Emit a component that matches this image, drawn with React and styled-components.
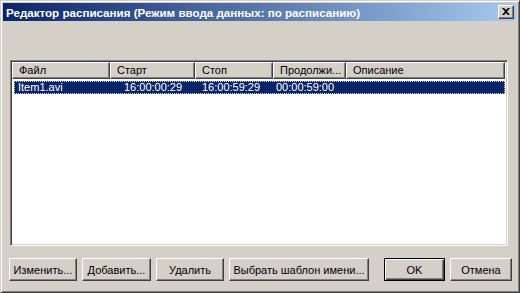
import React from "react";
import styled, { createGlobalStyle } from "styled-components";

const Global = createGlobalStyle`
  html, body { margin: 0; padding: 0; background: #d4d0c8; }
  body { font-family: "Liberation Sans", Arial, sans-serif; font-size: 11px; }
  * { box-sizing: border-box; }
`;

const Window = styled.div`
  width: 520px;
  height: 293px;
  display: flex;
  flex-direction: column;
  background: #d4d0c8;
  border: 1px solid;
  border-color: #d4d0c8 #404040 #404040 #d4d0c8;
  box-shadow: inset 1px 1px #ffffff, inset -1px -1px #808080;
  padding: 2px 3px 3px 2px;
`;

const TitleBar = styled.div`
  height: 18px;
  flex: none;
  display: flex;
  align-items: center;
  justify-content: space-between;
  padding: 0 2px 0 3px;
  background: linear-gradient(to right, #0a246a, #a6caf0);
`;

const TitleText = styled.span`
  color: #ffffff;
  font-family: "Liberation Sans", Arial, sans-serif;
  font-weight: bold;
  font-size: 11.6px;
  white-space: nowrap;
`;

const CloseButton = styled.div`
  width: 16px;
  height: 14px;
  background: #d4d0c8;
  border: 1px solid;
  border-color: #ffffff #404040 #404040 #ffffff;
  box-shadow: inset -1px -1px #808080;
  display: flex;
  align-items: center;
  justify-content: center;
  padding-bottom: 1px;
`;

const Client = styled.div`
  flex: 1;
  display: flex;
  flex-direction: column;
  padding: 39px 7px 8px 7px;
`;

const ListBox = styled.div`
  flex: 1;
  background: #ffffff;
  border: 1px solid;
  border-color: #808080 #ffffff #ffffff #808080;
  box-shadow: inset 1px 1px #404040, inset -1px -1px #d4d0c8;
  padding: 1px 2px 2px 1px;
  display: flex;
  flex-direction: column;
  margin-right: 1px;
`;

const Header = styled.div`
  display: flex;
  height: 17px;
  flex: none;
  background: #d4d0c8;
`;

const HeadCell = styled.div`
  width: ${(p) => (p.$w ? `${p.$w}px` : "auto")};
  flex: ${(p) => (p.$w ? "none" : "1")};
  border: 1px solid;
  border-color: #ffffff #404040 #404040 #ffffff;
  box-shadow: inset -1px -1px #808080;
  color: #000000;
  padding: 1px 0 0 6px;
  line-height: 13px;
  white-space: nowrap;
  overflow: hidden;
`;

const Row = styled.div`
  display: flex;
  height: 13px;
  margin: 2px 0 0 2px;
  background: ${(p) => (p.$selected ? "#0a246a" : "transparent")};
  color: ${(p) => (p.$selected ? "#ffffff" : "#000000")};
  outline: ${(p) => (p.$selected ? "1px dotted #d8d8a8" : "none")};
  outline-offset: -1px;
`;

const Cell = styled.div`
  width: ${(p) => (p.$w ? `${p.$w}px` : "auto")};
  flex: ${(p) => (p.$w ? "none" : "1")};
  padding-left: ${(p) => p.$indent}px;
  line-height: 13px;
  white-space: nowrap;
  overflow: hidden;
`;

const ButtonRow = styled.div`
  display: flex;
  align-items: center;
  gap: 5px;
  margin: 12px 0 0 -1px;
  flex: none;
`;

const Spacer = styled.div`
  width: ${(p) => p.$w}px;
  flex: none;
`;

const Button = styled.div`
  width: ${(p) => p.$w}px;
  height: 23px;
  flex: none;
  display: flex;
  align-items: center;
  justify-content: center;
  background: #d4d0c8;
  color: #000000;
  white-space: nowrap;
  border: 1px solid;
  border-color: ${(p) =>
    p.$default ? "#000000" : "#ffffff #404040 #404040 #ffffff"};
  box-shadow: ${(p) =>
    p.$default
      ? "inset 1px 1px #ffffff, inset -1px -1px #404040, inset -2px -2px #808080"
      : "inset -1px -1px #808080"};
`;

const columns = [
  { title: "Файл", w: 98, indent: 4 },
  { title: "Старт", w: 85, indent: 14 },
  { title: "Стоп", w: 78, indent: 7 },
  { title: "Продолжи...", w: 73, indent: 3 },
  { title: "Описание", w: 0, indent: 6 },
];

const rows = [["Item1.avi", "16:00:00:29", "16:00:59:29", "00:00:59:00", ""]];

const CloseIcon = () => (
  <svg width="8" height="7" viewBox="0 0 8 7">
    <path d="M0 0h2l2 2 2-2h2L5 3.5 8 7H6L4 5 2 7H0l3-3.5z" fill="#000" />
  </svg>
);

export default function App() {
  return (
    <>
      <Global />
      <Window>
        <TitleBar>
          <TitleText>Редактор расписания (Режим ввода данных: по расписанию)</TitleText>
          <CloseButton>
            <CloseIcon />
          </CloseButton>
        </TitleBar>
        <Client>
          <ListBox>
            <Header>
              {columns.map((c) => (
                <HeadCell key={c.title} $w={c.w || undefined}>
                  {c.title}
                </HeadCell>
              ))}
            </Header>
            {rows.map((r, i) => (
              <Row key={i} $selected>
                {r.map((v, j) => (
                  <Cell
                    key={j}
                    $w={columns[j].w ? columns[j].w - (j === 0 ? 2 : 0) : undefined}
                    $indent={columns[j].indent}
                  >
                    {v}
                  </Cell>
                ))}
              </Row>
            ))}
          </ListBox>
          <ButtonRow>
            <Button $w={68}>Изменить...</Button>
            <Button $w={69}>Добавить...</Button>
            <Button $w={68}>Удалить</Button>
            <Button $w={140}>Выбрать шаблон имени...</Button>
            <Spacer $w={5} />
            <Button $w={61} $default>OK</Button>
            <Button $w={62}>Отмена</Button>
          </ButtonRow>
        </Client>
      </Window>
    </>
  );
}
